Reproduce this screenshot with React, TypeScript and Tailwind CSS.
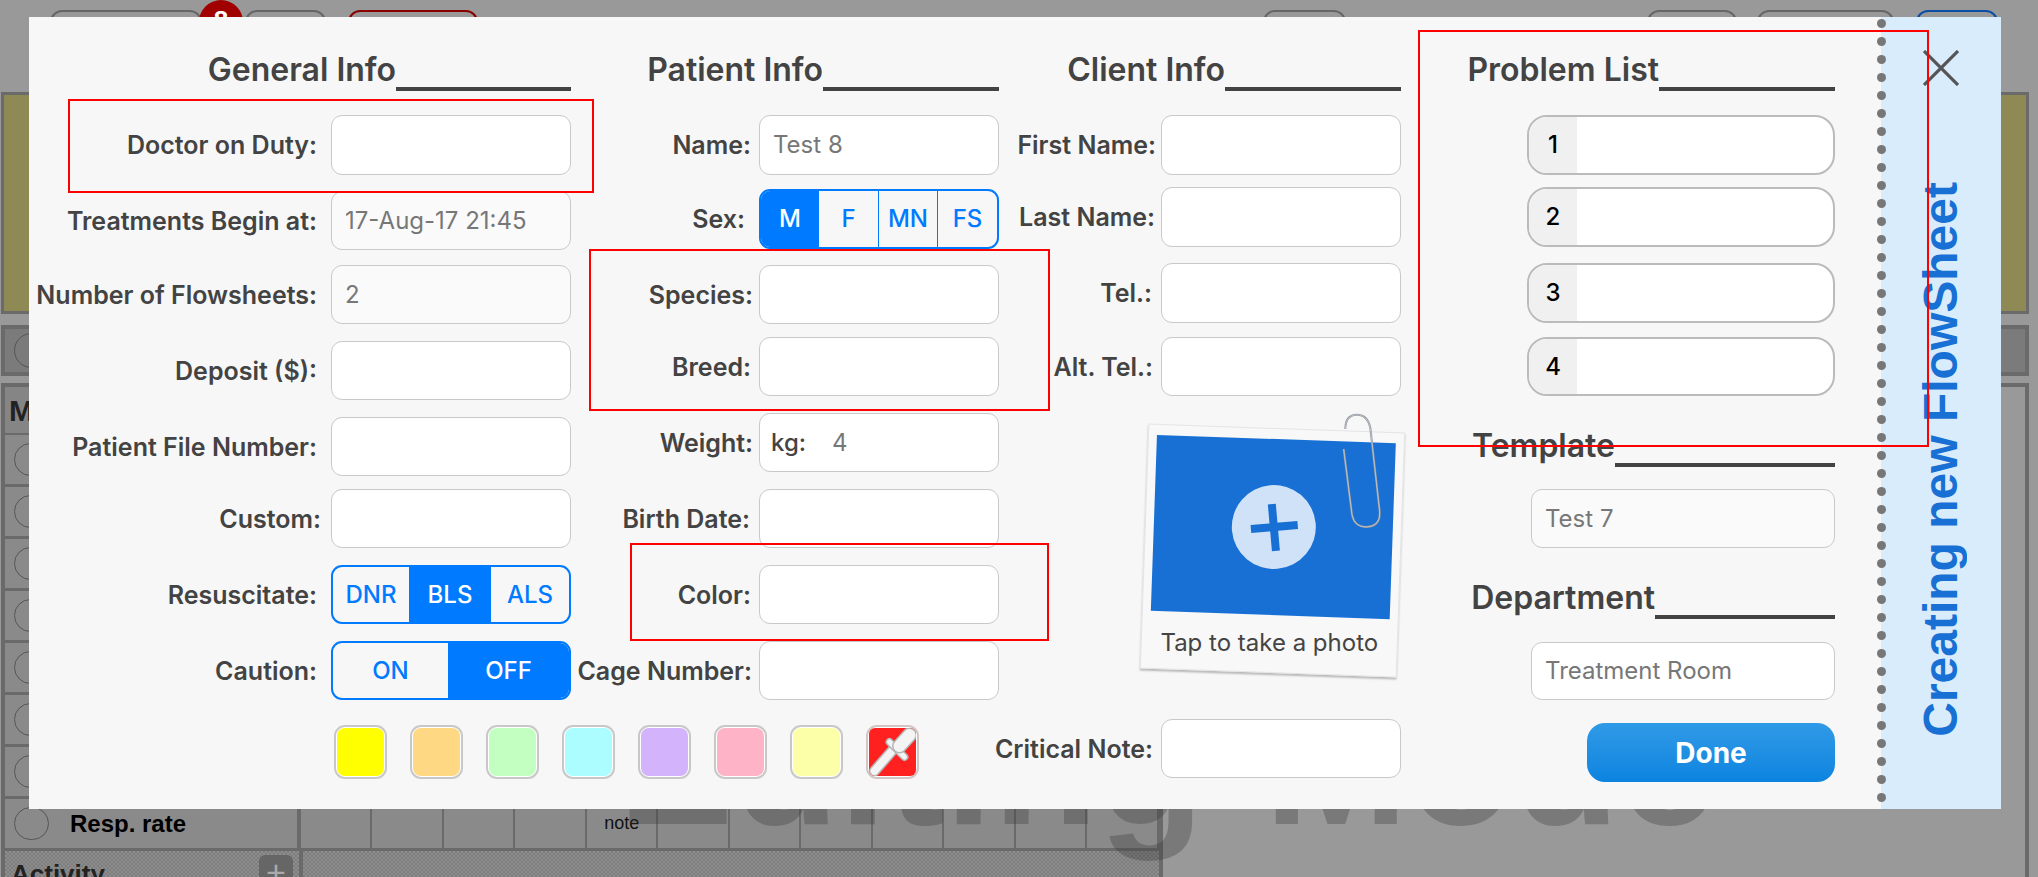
import React from "react";

const inputBase = "border border-[#c9c9c9] rounded-[11px] flex items-center text-[24px] text-[#777] pl-[13px] shrink-0";

function Field({ label, box = "", row, gap = "mr-[14px]", width = "w-[240px]", value, disabled, children }: {
  label?: string; box?: string; row: string; gap?: string; width?: string; value?: string; disabled?: boolean; children?: React.ReactNode;
}) {
  return (
    <div className={`flex items-center justify-end ${row}`}>
      {label && <span className={`whitespace-nowrap pt-[2px] text-[25px] font-semibold text-[#434343] ${gap}`}>{label}</span>}
      {children ?? (
        <div className={`${inputBase} h-full ${width} ${disabled ? "bg-[#fafafa]" : "bg-white"} ${box}`}>{value}</div>
      )}
    </div>
  );
}

function Heading({ text, line, className = "" }: { text: string; line: string; className?: string }) {
  return (
    <div className={`flex items-end justify-end h-[43px] ${className}`}>
      <span className="whitespace-nowrap text-[32px] leading-[43px] font-semibold text-[#434343]">{text}</span>
      <span className={`h-[4px] bg-[#434343] ${line}`} />
    </div>
  );
}

function Problem({ n, row }: { n: number; row: string }) {
  return (
    <div className={`flex justify-end ${row}`}>
      <div className="flex w-[308px] h-full overflow-hidden rounded-[20px] border-2 border-[#bbbbbb] bg-white">
        <div className="w-[48px] bg-[#f0f0f0] flex items-center justify-center text-[24px] font-medium text-black">{n}</div>
      </div>
    </div>
  );
}

const swatches = ["bg-[#ffff00]", "bg-[#ffd883]", "bg-[#c3ffc0]", "bg-[#acfdff]", "bg-[#d2b3fc]", "bg-[#ffb3c6]", "bg-[#fdffa8]"];

function Background() {
  const topBtn = "mt-[10px] h-[40px] rounded-t-[12px] border-2";
  const cells = [0, 1, 2, 3, 4, 5, 6, 7, 8, 9, 10, 11];
  const rows = ["Heart rate", "Pulse", "Temp", "Pain", "Mentation", "CRT", "MM", "Resp. rate"];
  return (
    <div className="font-['Liberation_Sans',sans-serif]">
      <div className="flex h-[92px]">
        <div className={`${topBtn} ml-[50px] w-[152px] border-[#666]`} />
        <div className="relative -ml-[3px] h-[44px] w-[44px] rounded-full bg-[#a00000] text-center text-[26px] leading-[40px] font-bold text-white">8</div>
        <div className={`${topBtn} ml-[2px] w-[81px] border-[#666]`} />
        <div className={`${topBtn} ml-[22px] w-[130px] border-[#8a0000]`} />
        <div className={`${topBtn} ml-[785px] w-[83px] border-[#666]`} />
        <div className={`${topBtn} ml-[301px] w-[90px] border-[#666]`} />
        <div className={`${topBtn} ml-[20px] w-[137px] border-[#666]`} />
        <div className={`${topBtn} ml-[22px] w-[82px] border-[#0a4fa5]`} />
      </div>
      <div className="ml-[1px] w-[2028px] h-[222px] border-[3px] border-[#6a6a6a] bg-[#8f8a55]" />
      <div className="mt-[11px] ml-[1px] w-[2028px] h-[51px] border-4 border-[#6a6a6a] bg-[#7b7b7b] flex items-center">
        <div className="ml-[9px] h-[35px] w-[35px] rounded-full border border-[#555]" />
      </div>
      <div className="mt-[7px] ml-[1px] w-[2028px] h-[494px] border-x-4 border-t-4 border-[#6a6a6a]">
        <div className="w-[1158px] border-r-4 border-[#6a6a6a]">
          <div className="h-[48px] flex items-center pl-[4px] text-[30px] font-bold text-[#222] bg-[#858585] border-b-2 border-[#6a6a6a]">Monitoring</div>
          {rows.map((r) => (
            <div key={r} className="flex h-[52px] bg-[#8a8a8a] border-b-[3px] border-[#6a6a6a]">
              <div className="flex items-center w-[298px] border-r-4 border-[#6a6a6a]">
                <div className="ml-[9px] h-[33px] w-[35px] rounded-full border border-[#555]" />
                <span className="ml-[21px] text-[24px] font-bold text-black">{r}</span>
              </div>
              {cells.map((c) => (
                <div key={c} className="w-[72px] border-r-2 border-[#6a6a6a] flex items-center justify-center text-[18px] text-[#111]">{c === 4 ? "note" : ""}</div>
              ))}
            </div>
          ))}
          <div className="flex h-[60px] bg-[repeating-conic-gradient(#7d7d7d_0_25%,#8d8d8d_0_50%)] bg-[length:4px_4px]">
            <div className="flex items-start w-[298px] border-r-4 border-[#6a6a6a] relative">
              <span className="ml-[6px] mt-[4px] text-[26px] font-bold text-[#222]">Activity</span>
              <div className="absolute left-[254px] top-[4px] h-[34px] w-[34px] rounded-[6px] bg-[#666] text-center text-[34px] leading-[34px] text-[#aaa]">+</div>
            </div>
          </div>
        </div>
      </div>
      <div className="absolute left-[618px] top-[678px] text-[173px] leading-[173px] font-bold whitespace-nowrap [word-spacing:12px] text-[rgba(50,50,50,0.3)]">Editing Mode</div>
    </div>
  );
}

function Dropper() {
  return (
    <svg viewBox="0 0 46 48" className="h-full w-full">
      <g fill="none" strokeLinecap="round">
        <path d="M5 43 L25 20" stroke="#b5b5b5" strokeWidth="11" />
        <path d="M5 43 L25 20" stroke="#f4f4f4" strokeWidth="8" />
        <path d="M20 14 L35 29" stroke="#b5b5b5" strokeWidth="8" />
        <path d="M20 14 L35 29" stroke="#f4f4f4" strokeWidth="5" />
        <path d="M30 18 L40 7" stroke="#b5b5b5" strokeWidth="15" />
        <path d="M30 18 L40 7" stroke="#f4f4f4" strokeWidth="12" />
      </g>
    </svg>
  );
}

function Polaroid() {
  return (
    <div className="relative mt-[32px] ml-auto h-[245px] w-[257px]">
      <div className="h-full w-full rotate-2 border border-[#e4e4e4] bg-[#f8f8f8] px-[8px] pt-[10px] shadow-[0_2px_2px_rgba(0,0,0,0.25)]">
        <div className="flex h-[176px] items-center justify-center bg-[#1870d5]">
          <div className="-rotate-[7deg] relative flex h-[84px] w-[84px] items-center justify-center rounded-full bg-[#d0e2f7]">
            <div className="absolute h-[8px] w-[47px] bg-[#1870d5]" />
            <div className="absolute h-[47px] w-[8px] bg-[#1870d5]" />
          </div>
        </div>
        <div className="mt-[14px] -rotate-2 text-center text-[24px] leading-[28px] text-[#444] whitespace-nowrap">Tap to take a photo</div>
      </div>
      <svg viewBox="635 40 120 348" className="absolute left-[198px] -top-[15px] h-[116px] w-[40px]">
        <path d="M640 148 L665 345 Q672 382 708 382 Q752 380 748 335 L720 85 Q712 45 680 45 Q645 45 645 88" fill="none" stroke="#8e949c" strokeWidth="6" />
        <path d="M640 148 L665 345 Q672 382 708 382 Q752 380 748 335 L720 85 Q712 45 680 45 Q645 45 645 88" fill="none" stroke="#e8eaee" strokeWidth="1.5" />
      </svg>
    </div>
  );
}

function Modal() {
  const dots = Array.from({ length: 44 }, (_, i) => i);
  return (
    <div className="absolute left-[29px] top-[17px] flex h-[792px] w-[1972px] bg-[#f7f7f7] font-['Inter',sans-serif]">
      <div className="flex w-[1852px] shrink-0">
        {/* General */}
        <div className="w-[542px] shrink-0 pt-[31px]">
          <Heading text="General Info" line="w-[175px]" />
          <Field row="mt-[24px] h-[60px]" label="Doctor on Duty:" />
          <Field row="mt-[16px] h-[59px]" label="Treatments Begin at:" value="17-Aug-17 21:45" disabled />
          <Field row="mt-[15px] h-[59px]" label="Number of Flowsheets:" value="2" disabled />
          <Field row="mt-[17px] h-[59px]" label="Deposit ($):" />
          <Field row="mt-[17px] h-[59px]" label="Patient File Number:" />
          <Field row="mt-[13px] h-[59px]" label="Custom:" gap="mr-[10px]" />
          <Field row="mt-[17px] h-[59px]" label="Resuscitate:">
            <div className="flex h-full w-[240px] shrink-0 overflow-hidden rounded-[11px] border-2 border-[#007aff] text-[24px] font-medium">
              <div className="flex w-[76px] items-center justify-center text-[#007aff]">DNR</div>
              <div className="flex w-[82px] items-center justify-center bg-[#007aff] text-white">BLS</div>
              <div className="flex flex-1 items-center justify-center text-[#007aff]">ALS</div>
            </div>
          </Field>
          <Field row="mt-[17px] h-[59px]" label="Caution:">
            <div className="flex h-full w-[240px] shrink-0 overflow-hidden rounded-[11px] border-2 border-[#007aff] text-[24px] font-medium">
              <div className="flex w-[115px] items-center justify-center text-[#007aff]">ON</div>
              <div className="flex flex-1 items-center justify-center bg-[#007aff] text-white">OFF</div>
            </div>
          </Field>
          <div className="mt-[25px] ml-[305px] flex w-[640px] gap-[23px]">
            {swatches.map((c) => (
              <div key={c} className="h-[54px] w-[53px] rounded-[11px] border-2 border-[#c8c8c8] bg-white p-[1px]">
                <div className={`h-full w-full rounded-[8px] ${c}`} />
              </div>
            ))}
            <div className="h-[54px] w-[53px] rounded-[11px] border-2 border-[#d4c4c4] bg-white p-[1px]">
              <div className="h-full w-full rounded-[6px] bg-[#ff2020] overflow-hidden">
                <Dropper />
              </div>
            </div>
          </div>
        </div>
        {/* Patient */}
        <div className="w-[428px] shrink-0 pt-[31px]">
          <Heading text="Patient Info" line="w-[176px]" />
          <Field row="mt-[24px] h-[60px]" label="Name:" gap="mr-[8px]" value="Test 8" />
          <Field row="mt-[14px] h-[60px]" label="Sex:" gap="mr-[14px]">
            <div className="flex h-full w-[240px] shrink-0 overflow-hidden rounded-[11px] border-2 border-[#007aff] text-[24px] font-medium text-[#007aff]">
              <div className="flex w-[58px] items-center justify-center bg-[#007aff] text-white">M</div>
              <div className="flex w-[60px] items-center justify-center border-r border-[#007aff]">F</div>
              <div className="flex w-[59px] items-center justify-center border-r border-[#007aff]">MN</div>
              <div className="flex flex-1 items-center justify-center">FS</div>
            </div>
          </Field>
          <Field row="mt-[16px] h-[59px]" label="Species:" gap="mr-[6px]" />
          <Field row="mt-[13px] h-[59px]" label="Breed:" gap="mr-[8px]" />
          <Field row="mt-[17px] h-[59px]" label="Weight:" gap="mr-[6px]">
            <div className={`${inputBase} h-full w-[240px] bg-white !pl-[11px]`}>
              <span className="w-[61px] font-medium text-[#444]">kg:</span>
              <span>4</span>
            </div>
          </Field>
          <Field row="mt-[17px] h-[59px]" label="Birth Date:" gap="mr-[9px]" />
          <Field row="mt-[17px] h-[59px]" label="Color:" gap="mr-[8px]" />
          <Field row="mt-[17px] h-[59px]" label="Cage Number:" gap="mr-[7px]" />
        </div>
        {/* Client */}
        <div className="w-[402px] shrink-0 pt-[31px]">
          <Heading text="Client Info" line="w-[176px]" />
          <Field row="mt-[24px] h-[60px]" label="First Name:" gap="mr-[5px]" />
          <Field row="mt-[12px] h-[60px]" label="Last Name:" gap="mr-[6px]" />
          <Field row="mt-[16px] h-[60px]" label="Tel.:" gap="mr-[9px]" />
          <Field row="mt-[14px] h-[59px]" label="Alt. Tel.:" gap="mr-[8px]" />
          <Polaroid />
          <Field row="mt-[46px] h-[59px]" label="Critical Note:" gap="mr-[8px]" />
        </div>
        {/* Right */}
        <div className="w-[434px] shrink-0 pt-[31px]">
          <Heading text="Problem List" line="w-[176px]" />
          <Problem n={1} row="mt-[24px] h-[60px]" />
          <Problem n={2} row="mt-[12px] h-[60px]" />
          <Problem n={3} row="mt-[16px] h-[60px]" />
          <Problem n={4} row="mt-[14px] h-[59px]" />
          <Heading text="Template" line="w-[220px]" className="mt-[28px]" />
          <Field row="mt-[22px] h-[59px]" width="w-[304px]" value="Test 7" disabled />
          <Heading text="Department" line="w-[180px]" className="mt-[28px]" />
          <Field row="mt-[23px] h-[58px]" width="w-[304px]" value="Treatment Room" />
          <div className="mt-[23px] flex justify-end">
            <div className="flex h-[59px] w-[248px] items-center justify-center rounded-[18px] bg-gradient-to-b from-[#2f9ae6] to-[#0a84e0] pt-[1px] text-[28px] font-bold text-white">Done</div>
          </div>
        </div>
      </div>
      {/* Side panel */}
      <div className="relative flex w-[120px] shrink-0 flex-col items-center bg-[#d9ecfb]">
        <div className="absolute -left-[5px] top-0 flex w-[10px] flex-col items-center gap-[9px] pt-[2px]">
          {dots.map((d) => (
            <div key={d} className="h-[9px] w-[9px] rounded-full bg-[#777]" />
          ))}
        </div>
        <svg viewBox="0 0 36 36" className="mt-[33px] h-[36px] w-[36px]" fill="none" stroke="#555" strokeWidth="3.2">
          <path d="M1 1 L35 35 M35 1 L1 35" />
        </svg>
        <div className="mt-[96px] rotate-180 whitespace-nowrap text-[48px] leading-[48px] font-bold text-[#1870d5] [writing-mode:vertical-rl] font-['Liberation_Sans',sans-serif]">Creating new FlowSheet</div>
      </div>
    </div>
  );
}

function Marks() {
  const m = "absolute border-2 border-[#ff0000] pointer-events-none";
  return (
    <>
      <div className={`${m} left-[68px] top-[99px] h-[94px] w-[526px]`} />
      <div className={`${m} left-[589px] top-[249px] h-[162px] w-[461px]`} />
      <div className={`${m} left-[630px] top-[543px] h-[98px] w-[419px]`} />
      <div className={`${m} left-[1418px] top-[30px] h-[417px] w-[511px]`} />
    </>
  );
}

export default function App() {
  return (
    <div className="relative h-[877px] w-[2038px] overflow-hidden bg-[#999999]">
      <Background />
      <Modal />
      <Marks />
    </div>
  );
}
